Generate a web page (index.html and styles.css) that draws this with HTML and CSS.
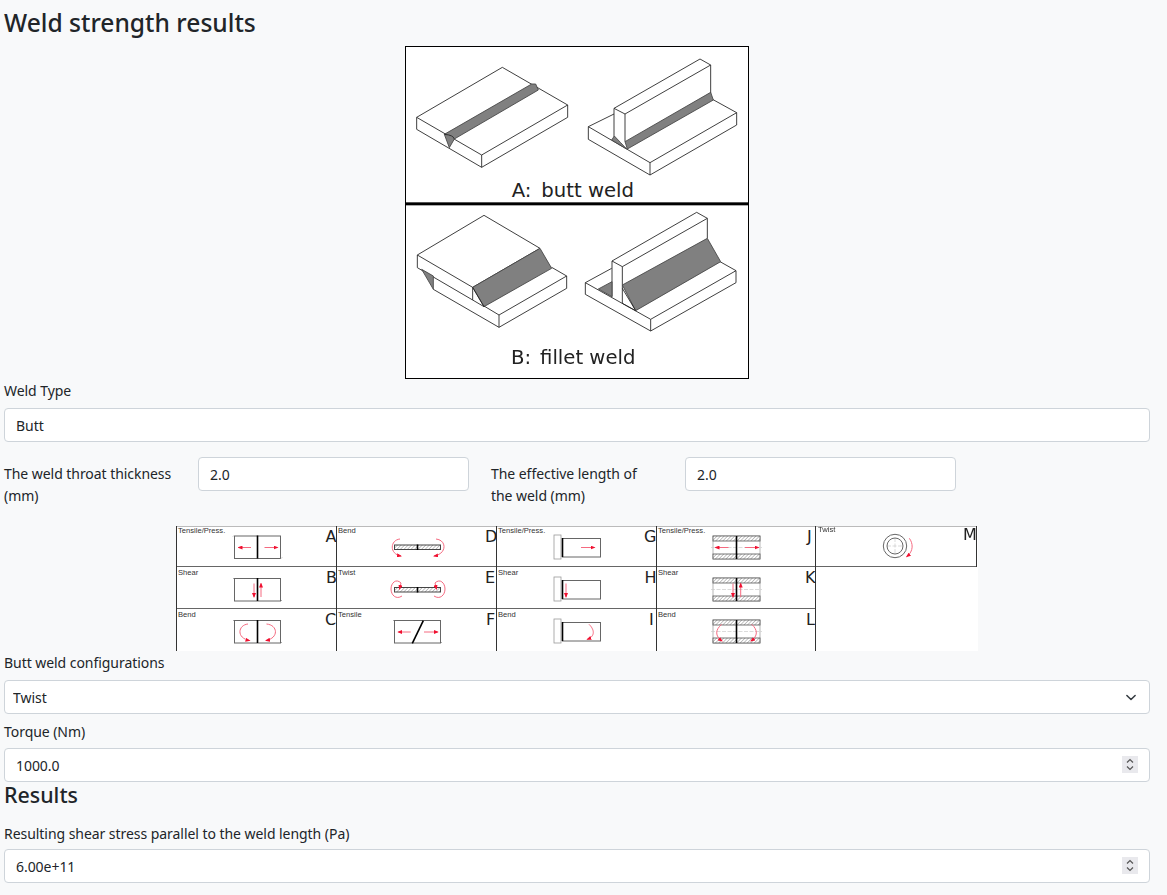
FILE: index.html
```html
<!DOCTYPE html>
<html lang="en">
<head>
  <meta charset="UTF-8" />
  <meta name="viewport" content="width=device-width, initial-scale=1.0"/>
  <title>Weld strength results</title>
  <link rel="stylesheet" href="styles.css">
</head>
<body>
  <h2 class="page-title">Weld strength results</h2>

  <div class="figure figure-weld">
    <svg class="weld-svg" width="344" height="333" viewBox="15 18 1032 999" xmlns="http://www.w3.org/2000/svg">
      <rect x="15" y="18" width="1032" height="999" fill="#fff"/>
      <g class="weld-lines">
        <!-- A: butt weld, flat plates -->
        <path d="M50 232 307 82 503 195 245 345Z"/>
        <path d="M50 232V268L245 382 503 232V195M245 345V382"/>
        <path class="weld-fill" d="M133 283 395 132 407 132 415 150 163 297 148 323Z"/>
        <path d="M133 283Q160 285 163 297"/>
        <!-- A: butt weld, upright -->
        <path d="M565 260 642 222M932 175 1010 218 750 368 565 260V298L750 405 1010 255V218M750 368V405"/>
        <path d="M642 205 900 57 932 75 675 222ZM642 205V290M675 222V305M932 75V160"/>
        <path class="weld-fill" d="M675 305 932 157 940 180 682 327Z"/>
        <path class="weld-fill" d="M635 300 643 288 662 308 680 327 660 315Z"/>
      </g>
      <text class="weld-caption" x="335" y="470">A: <tspan dx="11">butt weld</tspan></text>
      <rect x="15" y="487" width="1032" height="9" fill="#000"/>
      <g class="weld-lines" transform="translate(0 480)">
        <!-- B: fillet weld, lap -->
        <path d="M52 165 252 46 420 145 218 262Z"/>
        <path d="M52 165V203L218 300V262"/>
        <path class="weld-fill" d="M218 262 420 145 455 205 252 320Z"/>
        <path d="M218 300 252 320 218 262"/>
        <path class="weld-fill" d="M65 208 100 228V268Z"/>
        <path d="M100 268 297 382 500 265V228L455 202M297 345 500 228M297 345 252 318M297 345V382"/>
        <!-- B: fillet weld, tee -->
        <path d="M556 248 635 205M960 185 1008 212 752 358 556 248V283L752 393 1008 248V212M752 358V393"/>
        <path d="M636 183 890 37 922 55 667 200ZM636 183V290M667 200V310M922 55V115"/>
        <path class="weld-fill" d="M667 255 922 115 962 185 707 332Z"/>
        <path d="M667 265 707 332 667 310"/>
        <path class="weld-fill" d="M595 267 636 245V290Z"/>
      </g>
      <text class="weld-caption" x="333" y="973">B: <tspan dx="8">fillet weld</tspan></text>
      <rect x="16.500" y="19.500" width="1029" height="996" fill="none" stroke="#000" stroke-width="3"/>
    </svg>
  </div>

  <div class="field field-spaced">
    <label class="field-label">Weld Type</label>
    <input class="field-input" type="text" value="Butt" />
  </div>

  <div class="field-row">
    <div class="field-inline">
      <label class="field-label-side">The weld throat thickness (mm)</label>
      <input class="field-input" type="text" value="2.0" />
    </div>
    <div class="field-inline">
      <label class="field-label-side">The effective length of the weld (mm)</label>
      <input class="field-input" type="text" value="2.0" />
    </div>
  </div>

  <div class="figure figure-config">
    <svg class="config-svg" width="802" height="125" viewBox="176 526 802 125" xmlns="http://www.w3.org/2000/svg">
      <defs>
        <marker id="head" markerWidth="5" markerHeight="4" refX="4" refY="2" orient="auto">
          <path d="M0 0 5 2 0 4Z" fill="#f01030"/>
        </marker>
        <pattern id="hatch" width="2.500" height="2.500" patternUnits="userSpaceOnUse" patternTransform="rotate(45)">
          <rect width="2.500" height="2.500" fill="#fff"/>
          <path d="M0 0V2.500" stroke="#888" stroke-width="1"/>
        </pattern>
        <g id="plate">
          <rect x="0.500" y="0.500" width="46" height="22.500" class="box"/>
          <path d="M0 0-1 1M47 23 48 22" class="faint"/>
        </g>
        <g id="butt">
          <use href="#plate"/>
          <path d="M23.500 0V23" class="joint"/>
        </g>
        <g id="flat">
          <rect x="0.500" y="0.500" width="46" height="4.500" fill="url(#hatch)" stroke="#444"/>
          <path d="M23.500 0V5.500" class="joint"/>
        </g>
        <g id="tee">
          <rect x="0" y="-3" width="7" height="24" class="bracket"/>
          <rect x="8.500" y="0.500" width="38" height="18.500" class="box"/>
          <path d="M8.500 0V19" class="joint"/>
        </g>
        <g id="pipe">
          <rect x="0" y="0" width="47" height="23" class="box-light"/>
          <rect x="0" y="0" width="47" height="5" fill="url(#hatch)" stroke="#555" stroke-width="0.800"/>
          <rect x="0" y="18" width="47" height="5" fill="url(#hatch)" stroke="#555" stroke-width="0.800"/>
          <path d="M-2 11.500H49" class="centre"/>
          <path d="M23.500 0V23" class="joint"/>
        </g>
      </defs>

      <rect x="176" y="526" width="802" height="125" fill="#fff"/>

      <!-- grid -->
      <path d="M176 526.500H976" stroke="#bbb"/>
      <path d="M176 566.500H976M176 608.500H816" stroke="#666"/>
      <path d="M176.500 526V651M336.500 526V651M496.500 526V651M656.500 526V651M815.500 526V651M976.500 526V567" stroke="#333"/>

      <!-- column A-C -->
      <text class="cell-name" x="178" y="533">Tensile/Press.</text>
      <text class="cell-letter" x="325.500" y="542">A</text>
      <use href="#butt" x="234" y="535.500"/>
      <path class="force" d="M251 547.500H238.500"/>
      <path class="force" d="M264.500 547.500H277.500"/>

      <text class="cell-name" x="178" y="575">Shear</text>
      <text class="cell-letter" x="326" y="583">B</text>
      <use href="#butt" x="234" y="578"/>
      <path class="force" d="M254 583.500V597"/>
      <path class="force" d="M261 597V583.500"/>

      <text class="cell-name" x="178" y="617">Bend</text>
      <text class="cell-letter" x="325" y="625">C</text>
      <use href="#butt" x="234" y="620"/>
      <path class="force" d="M248 624C238 625 236 638 249.500 640.500"/>
      <path class="force" d="M266.500 624C278 625 279 638 266 640.500"/>

      <!-- column D-F -->
      <text class="cell-name" x="338" y="533">Bend</text>
      <text class="cell-letter" x="485" y="542">D</text>
      <use href="#flat" x="394" y="544.500"/>
      <path class="force" d="M400 539C390 540 389 554 401 556"/>
      <path class="force" d="M436 539C447 540 447 554 434 556"/>

      <text class="cell-name" x="338" y="575">Twist</text>
      <text class="cell-letter" x="485" y="583">E</text>
      <use href="#flat" x="394" y="587"/>
      <path class="force" d="M402 596C396 600 391 595 391 589 391 583 396 578 401 583L399.500 589"/>
      <path class="force" d="M434 596C440 600 445 595 445 589 445 583 440 578 435 583L436.500 589"/>

      <text class="cell-name" x="338" y="617">Tensile</text>
      <text class="cell-letter" x="486" y="625">F</text>
      <use href="#plate" x="394" y="620"/>
      <path d="M412.300 643.300 423.300 620.700" class="joint"/>
      <path class="force" d="M410.700 632H398.300"/>
      <path class="force" d="M424 632H437.700"/>

      <!-- column G-I -->
      <text class="cell-name" x="498" y="533">Tensile/Press.</text>
      <text class="cell-letter" x="644" y="542">G</text>
      <use href="#tee" x="554" y="538"/>
      <path class="force" d="M581 547.500H594.500"/>

      <text class="cell-name" x="498" y="575">Shear</text>
      <text class="cell-letter" x="644.500" y="583">H</text>
      <use href="#tee" x="554" y="580"/>
      <path class="force" d="M566 583.500V597"/>

      <text class="cell-name" x="498" y="617">Bend</text>
      <text class="cell-letter" x="649" y="625">I</text>
      <use href="#tee" x="554" y="622"/>
      <path class="force" d="M589 624.300C594 629 596 636 587.300 639.300"/>

      <!-- column J-L -->
      <text class="cell-name" x="658" y="533">Tensile/Press.</text>
      <text class="cell-letter" x="807" y="542">J</text>
      <use href="#pipe" x="713" y="536"/>
      <path class="force" d="M728.500 547.500H715.500"/>
      <path class="force" d="M745 547.500H758.500"/>

      <text class="cell-name" x="658" y="575">Shear</text>
      <text class="cell-letter" x="805" y="583">K</text>
      <use href="#pipe" x="713" y="578"/>
      <path class="force" d="M733 583.500V597"/>
      <path class="force" d="M740.700 597V583.500"/>

      <text class="cell-name" x="658" y="617">Bend</text>
      <text class="cell-letter" x="806" y="625">L</text>
      <use href="#pipe" x="713" y="620"/>
      <path class="force" d="M721.700 624.300C715 630 715 636 722 641"/>
      <path class="force" d="M751.700 624.300C758 630 758 636 751 641"/>

      <!-- M -->
      <text class="cell-name" x="818" y="532">Twist</text>
      <text class="cell-letter" x="963" y="540">M</text>
      <path d="M887 546H903M895 538V554" class="centre"/>
      <circle cx="895" cy="546" r="11.700" fill="none" stroke="#666"/>
      <circle cx="895" cy="546" r="8" fill="none" stroke="#666"/>
      <path class="force" d="M909.300 538.300C913 543 914 551 906.700 556.700"/>
    </svg>
  </div>

  <div class="field field-spaced field-config">
    <label class="field-label">Butt weld configurations</label>
    <select class="field-select">
      <option>Twist</option>
    </select>
  </div>

  <div class="field field-torque">
    <label class="field-label">Torque (Nm)</label>
    <input class="field-input" type="number" value="1000.0" />
  </div>

  <h3 class="section-title">Results</h3>

  <div class="field field-result">
    <label class="field-label">Resulting shear stress parallel to the weld length (Pa)</label>
    <input class="field-input" type="number" value="6.00e+11" />
  </div>
</body>
</html>
```

FILE: styles.css
```css
body {
  font-family: "Noto Sans", sans-serif;
  font-size: 14px;
  line-height: 22px;
  letter-spacing: -0.05px;
  margin: 0;
  padding: 0 17px 0 4px;
  background-color: #f8f9fa;
  color: #212529;
}
.page-title {
  font-size: 24.600px;
  font-weight: 500;
  line-height: 30px;
  letter-spacing: 0;
  margin: 8px 0 8px;
}
.figure {
  display: flex;
  justify-content: center;
}
.figure svg {
  display: block;
  overflow: visible;
  filter: blur(0.35px);
}
.figure-weld {
  margin-bottom: 1px;
}
.figure-config {
  margin: 19px 0 1px;
}
.weld-lines path {
  fill: none;
  stroke: #222;
  stroke-width: 2.6;
  stroke-linejoin: round;
}
.weld-lines path.weld-fill {
  fill: #808080;
  stroke: #444;
}
.weld-caption {
  font-family: "DejaVu Sans", sans-serif;
  font-size: 59px;
  letter-spacing: 0;
  fill: #222;
}
.config-svg .box {
  fill: none;
  stroke: #666;
  stroke-width: 1;
}
.config-svg .box-light {
  fill: none;
  stroke: #888;
  stroke-width: 0.6;
}
.config-svg .bracket {
  fill: none;
  stroke: #999;
  stroke-width: 0.8;
}
.config-svg .faint {
  stroke: #aaa;
  fill: none;
}
.config-svg .joint {
  stroke: #000;
  stroke-width: 1.6;
  fill: none;
}
.config-svg .centre {
  stroke: #ccc;
  stroke-width: 0.7;
  stroke-dasharray: 4 1.5;
  fill: none;
}
.config-svg .force {
  stroke: #f56a80;
  stroke-width: 1;
  fill: none;
  marker-end: url(#head);
}
.cell-name {
  font-family: "Liberation Sans", sans-serif;
  font-size: 7.600px;
  letter-spacing: 0;
  fill: #333;
}
.cell-letter {
  font-family: "DejaVu Sans", sans-serif;
  font-size: 16px;
  letter-spacing: 0;
  fill: #222;
}
.field {
  margin-bottom: 15px;
}
.field-label {
  display: block;
  margin-bottom: 5px;
}
.field-spaced .field-label {
  margin-bottom: 6px;
}
.field-input,
.field-select {
  display: block;
  box-sizing: border-box;
  width: 100%;
  height: 34px;
  padding: 0 11px;
  font-family: inherit;
  font-size: 14px;
  letter-spacing: inherit;
  color: #212529;
  background-color: #fff;
  border: 1px solid #ced4da;
  border-radius: 4px;
  outline: none;
}
.field-input[type="number"]::-webkit-inner-spin-button {
  -webkit-appearance: none;
  opacity: 1;
  width: 16px;
  height: 17px;
  background: #e9e9ed url("data:image/svg+xml,%3csvg xmlns='http://www.w3.org/2000/svg' viewBox='0 0 16 17'%3e%3cpath fill='none' stroke='%23555' stroke-width='1.2' d='M5 6.500 8 3.500 11 6.500M5 10.500 8 13.500 11 10.500'/%3e%3c/svg%3e") center no-repeat;
}
.field-select {
  appearance: none;
  padding-left: 8px;
  background-image: url("data:image/svg+xml,%3csvg xmlns='http://www.w3.org/2000/svg' viewBox='0 0 16 16'%3e%3cpath fill='none' stroke='%23343a40' stroke-linecap='round' stroke-linejoin='round' stroke-width='2.200' d='m2 5 6 6 6-6'/%3e%3c/svg%3e");
  background-repeat: no-repeat;
  background-position: right 12px center;
  background-size: 12px 11px;
}
.field-row {
  display: flex;
  gap: 22px;
}
.field-inline {
  display: flex;
  width: 465px;
}
.field-label-side {
  flex: 0 0 194px;
  box-sizing: border-box;
  padding-right: 24px;
  padding-top: 6px;
}
.field-config {
  margin-bottom: 7px;
}
.field-torque {
  margin-bottom: 0;
}
.section-title {
  font-size: 21.400px;
  font-weight: 500;
  line-height: 26px;
  letter-spacing: 0;
  margin: 0 0 15px;
}
.field-result .field-label {
  margin-bottom: 4px;
}
```
